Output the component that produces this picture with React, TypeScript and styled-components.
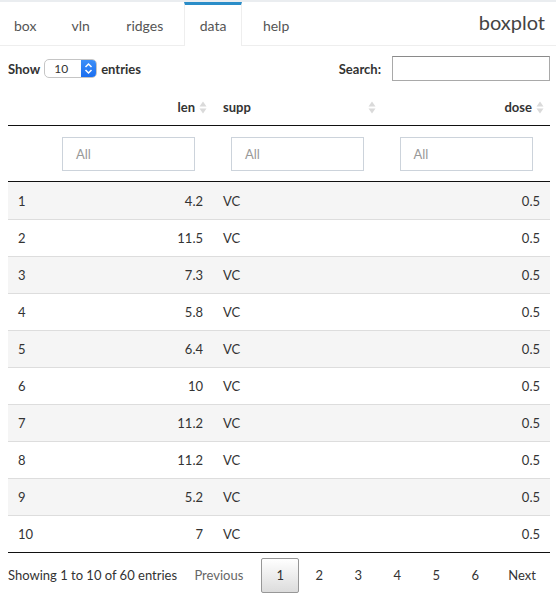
import React from "react";
import styled, { createGlobalStyle } from "styled-components";

const Global = createGlobalStyle`
  html, body { margin: 0; padding: 0; background: #fff; }
  body { font-family: Lato, "Noto Sans", sans-serif; color: #333; font-size: 14px; }
  * { box-sizing: border-box; }
`;

const Page = styled.div`
  width: 556px;
  border-top: 2px solid #eaedf0;
`;

const Nav = styled.div`
  display: flex;
  align-items: flex-end;
  height: 44px;
  border-bottom: 1px solid #eeeeee;
`;

const Tab = styled.div<{ $active?: boolean }>`
  height: ${(p) => (p.$active ? "44px" : "42px")};
  margin-bottom: ${(p) => (p.$active ? "-1px" : "0")};
  padding: 0 15px 1px;
  margin-right: 4.5px;
  display: flex;
  align-items: center;
  font-size: 14px;
  color: #555;
  background: #fff;
  border-top: 3px solid ${(p) => (p.$active ? "#2a8dc8" : "transparent")};
  border-left: 1px solid ${(p) => (p.$active ? "#eeeeee" : "transparent")};
  border-right: 1px solid ${(p) => (p.$active ? "#eeeeee" : "transparent")};
  &:first-child {
    padding-left: 13px;
    margin-right: 3px;
  }
`;

const Title = styled.div`
  margin-left: auto;
  margin-right: 11px;
  align-self: center;
  font-size: 20px;
  font-weight: 400;
  color: #444;
  margin-top: -4px;
`;

const Content = styled.div`
  padding: 0 6px 0 8px;
`;

const Controls = styled.div`
  display: flex;
  justify-content: space-between;
  align-items: center;
  height: 43px;
  padding-top: 2px;
`;

const Label = styled.label`
  display: flex;
  align-items: center;
  gap: 4px;
  font-weight: bold;
  font-size: 13px;
`;

const SelectBox = styled.div`
  width: 53px;
  height: 19px;
  border: 1px solid #c5c5c5;
  border-radius: 5px;
  display: flex;
  align-items: stretch;
  font-weight: normal;
  font-size: 12px;
  overflow: hidden;
  background: #fff;
`;

const SelectText = styled.span`
  flex: 1;
  padding-left: 9px;
  line-height: 17px;
`;

const Stepper = styled.span`
  width: 15px;
  background: linear-gradient(#3d8ff8, #1a6ef0);
  display: flex;
  align-items: center;
  justify-content: center;
`;

const SearchInput = styled.div`
  width: 158px;
  height: 25px;
  border: 1px solid #a9a9a9;
  border-top-color: #8a8a8a;
  margin-left: 7px;
`;

const Table = styled.div`
  display: grid;
  grid-template-columns: 36px 169px 169px 168px;
`;

const HeadCell = styled.div<{ $align: "left" | "right" }>`
  height: 37px;
  border-bottom: 1px solid #111;
  display: flex;
  align-items: center;
  justify-content: ${(p) => (p.$align === "right" ? "flex-end" : "space-between")};
  gap: 4px;
  padding: 0 6px 0 10px;
  font-weight: bold;
  font-size: 13px;
`;

const FilterCell = styled.div`
  height: 56px;
  border-bottom: 1px solid #111;
  display: flex;
  align-items: center;
  justify-content: center;
`;

const FilterInput = styled.div`
  width: 133px;
  height: 34px;
  border: 1px solid #ccd3db;
  color: #999;
  font-size: 13px;
  padding-left: 13px;
  display: flex;
  align-items: center;
`;

const Cell = styled.div<{ $odd: boolean; $align: "left" | "right"; $last: boolean; $first: boolean }>`
  height: ${(p) => (p.$last ? "38px" : "37px")};
  border-top: ${(p) => (p.$first ? "none" : "1px solid #dddddd")};
  background: ${(p) => (p.$odd ? "#f5f5f5" : "#fff")};
  display: flex;
  align-items: center;
  justify-content: ${(p) => (p.$align === "right" ? "flex-end" : "flex-start")};
  padding: 0 10px;
  font-size: 13px;
  ${(p) => (p.$last ? "border-bottom: 1px solid #111;" : "")}
`;

const Footer = styled.div`
  display: flex;
  align-items: center;
  height: 44px;
  font-size: 13px;
`;

const Info = styled.div`
  white-space: nowrap;
  flex-shrink: 0;
`;

const Pager = styled.div`
  margin-left: auto;
  display: flex;
  align-items: center;
`;

const PageBtn = styled.div<{ $current?: boolean; $disabled?: boolean }>`
  min-width: 38px;
  height: 35px;
  padding: 0 ${(p) => (p.$disabled ? "16px" : "12px")} 0 12px;
  display: flex;
  align-items: center;
  justify-content: center;
  margin-right: 1px;
  white-space: nowrap;
  color: ${(p) => (p.$disabled ? "#666" : "#333")};
  border: 1px solid ${(p) => (p.$current ? "#979797" : "transparent")};
  border-radius: 2px;
  background: ${(p) => (p.$current ? "linear-gradient(#fff, #dcdcdc)" : "transparent")};
`;

const SortIcon = () => (
  <svg width="8" height="13" viewBox="0 0 8 13">
    <path d="M4 0.5 L7.5 5.5 L0.5 5.5 Z" fill="#dadada" />
    <path d="M4 12.5 L7.5 7.5 L0.5 7.5 Z" fill="#dadada" />
  </svg>
);

const rows: [number, number, string, number][] = [
  [1, 4.2, "VC", 0.5],
  [2, 11.5, "VC", 0.5],
  [3, 7.3, "VC", 0.5],
  [4, 5.8, "VC", 0.5],
  [5, 6.4, "VC", 0.5],
  [6, 10, "VC", 0.5],
  [7, 11.2, "VC", 0.5],
  [8, 11.2, "VC", 0.5],
  [9, 5.2, "VC", 0.5],
  [10, 7, "VC", 0.5],
];

export default function App() {
  return (
    <Page>
      <Global />
      <Nav>
        <Tab>box</Tab>
        <Tab>vln</Tab>
        <Tab>ridges</Tab>
        <Tab $active>data</Tab>
        <Tab>help</Tab>
        <Title>boxplot</Title>
      </Nav>
      <Content>
        <Controls>
          <Label>
            Show
            <SelectBox>
              <SelectText>10</SelectText>
              <Stepper>
                <svg width="9" height="13" viewBox="0 0 9 13">
                  <path d="M1.5 5 L4.5 2 L7.5 5" stroke="#fff" strokeWidth="1.5" fill="none" />
                  <path d="M1.5 8 L4.5 11 L7.5 8" stroke="#fff" strokeWidth="1.5" fill="none" />
                </svg>
              </Stepper>
            </SelectBox>
            entries
          </Label>
          <Label>
            Search:
            <SearchInput />
          </Label>
        </Controls>
        <Table>
          <HeadCell $align="right" />
          <HeadCell $align="right">
            len <SortIcon />
          </HeadCell>
          <HeadCell $align="left">
            supp <SortIcon />
          </HeadCell>
          <HeadCell $align="right">
            dose <SortIcon />
          </HeadCell>
          <FilterCell />
          <FilterCell>
            <FilterInput>All</FilterInput>
          </FilterCell>
          <FilterCell>
            <FilterInput>All</FilterInput>
          </FilterCell>
          <FilterCell>
            <FilterInput>All</FilterInput>
          </FilterCell>
          {rows.map((r, i) => {
            const odd = i % 2 === 0;
            const last = i === rows.length - 1;
            const first = i === 0;
            return (
              <React.Fragment key={i}>
                <Cell $odd={odd} $align="left" $last={last} $first={first}>{r[0]}</Cell>
                <Cell $odd={odd} $align="right" $last={last} $first={first}>{r[1]}</Cell>
                <Cell $odd={odd} $align="left" $last={last} $first={first}>{r[2]}</Cell>
                <Cell $odd={odd} $align="right" $last={last} $first={first}>{r[3]}</Cell>
              </React.Fragment>
            );
          })}
        </Table>
        <Footer>
          <Info>Showing 1 to 10 of 60 entries</Info>
          <Pager>
            <PageBtn $disabled>Previous</PageBtn>
            <PageBtn $current>1</PageBtn>
            <PageBtn>2</PageBtn>
            <PageBtn>3</PageBtn>
            <PageBtn>4</PageBtn>
            <PageBtn>5</PageBtn>
            <PageBtn>6</PageBtn>
            <PageBtn>Next</PageBtn>
          </Pager>
        </Footer>
      </Content>
    </Page>
  );
}
